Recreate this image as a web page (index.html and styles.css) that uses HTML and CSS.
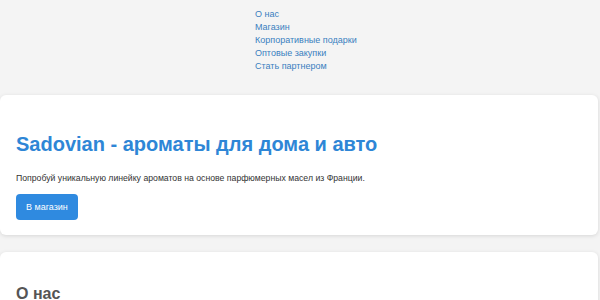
FILE: index.html
```html
<!DOCTYPE html>
<html lang="ru">
<head>
  <meta charset="UTF-8">
  <meta name="viewport" content="width=device-width, initial-scale=1.0">
  <title>Sadovian - ароматы для дома и авто</title>
  <link rel="stylesheet" href="styles.css">
</head>
<body>
  <nav class="menu">
    <ul>
      <li><a href="#about">О нас</a></li>
      <li><a href="#shop">Магазин</a></li>
      <li><a href="#corporate">Корпоративные подарки</a></li>
      <li><a href="#wholesale">Оптовые закупки</a></li>
      <li><a href="#partner">Стать партнером</a></li>
    </ul>
  </nav>

  <section class="card hero">
    <h1>Sadovian - ароматы для дома и авто</h1>
    <p>Попробуй уникальную линейку ароматов на основе парфюмерных масел из Франции.</p>
    <a class="btn" href="#shop">В магазин</a>
  </section>

  <section class="card" id="about">
    <h2>О нас</h2>
  </section>
</body>
</html>
```

FILE: styles.css
```css
body {
  font-family: "Liberation Sans", Arial, sans-serif;
  background-color: #f4f4f4;
  margin: 0;
  color: #333;
}
.menu ul {
  list-style: none;
  margin: 0;
  padding: 8px 0 0 255px;
}
.menu li {
  font-size: 9px;
  line-height: 13px;
}
.menu a {
  color: #3a7fc0;
  text-decoration: none;
}
.card {
  background-color: #fff;
  border-radius: 6px;
  box-shadow: 0 1px 4px rgba(0, 0, 0, 0.12);
  margin: 0 2px 17px 0;
  padding: 1px 16px 15px;
}
.hero {
  margin-top: 22px;
}
.hero h1 {
  color: #2e86d6;
  font-size: 20px;
  margin: 35px 0 0;
  line-height: 26px;
}
.hero p {
  font-size: 8.7px;
  margin: 16px 0 11px;
}
.btn {
  display: inline-block;
  background-color: #2f8ae0;
  color: #fff;
  font-size: 9px;
  text-decoration: none;
  padding: 8px 10px;
  border-radius: 4px;
}
h2 {
  color: #555;
  font-size: 16px;
  margin: 32px 0 0;
}
```
